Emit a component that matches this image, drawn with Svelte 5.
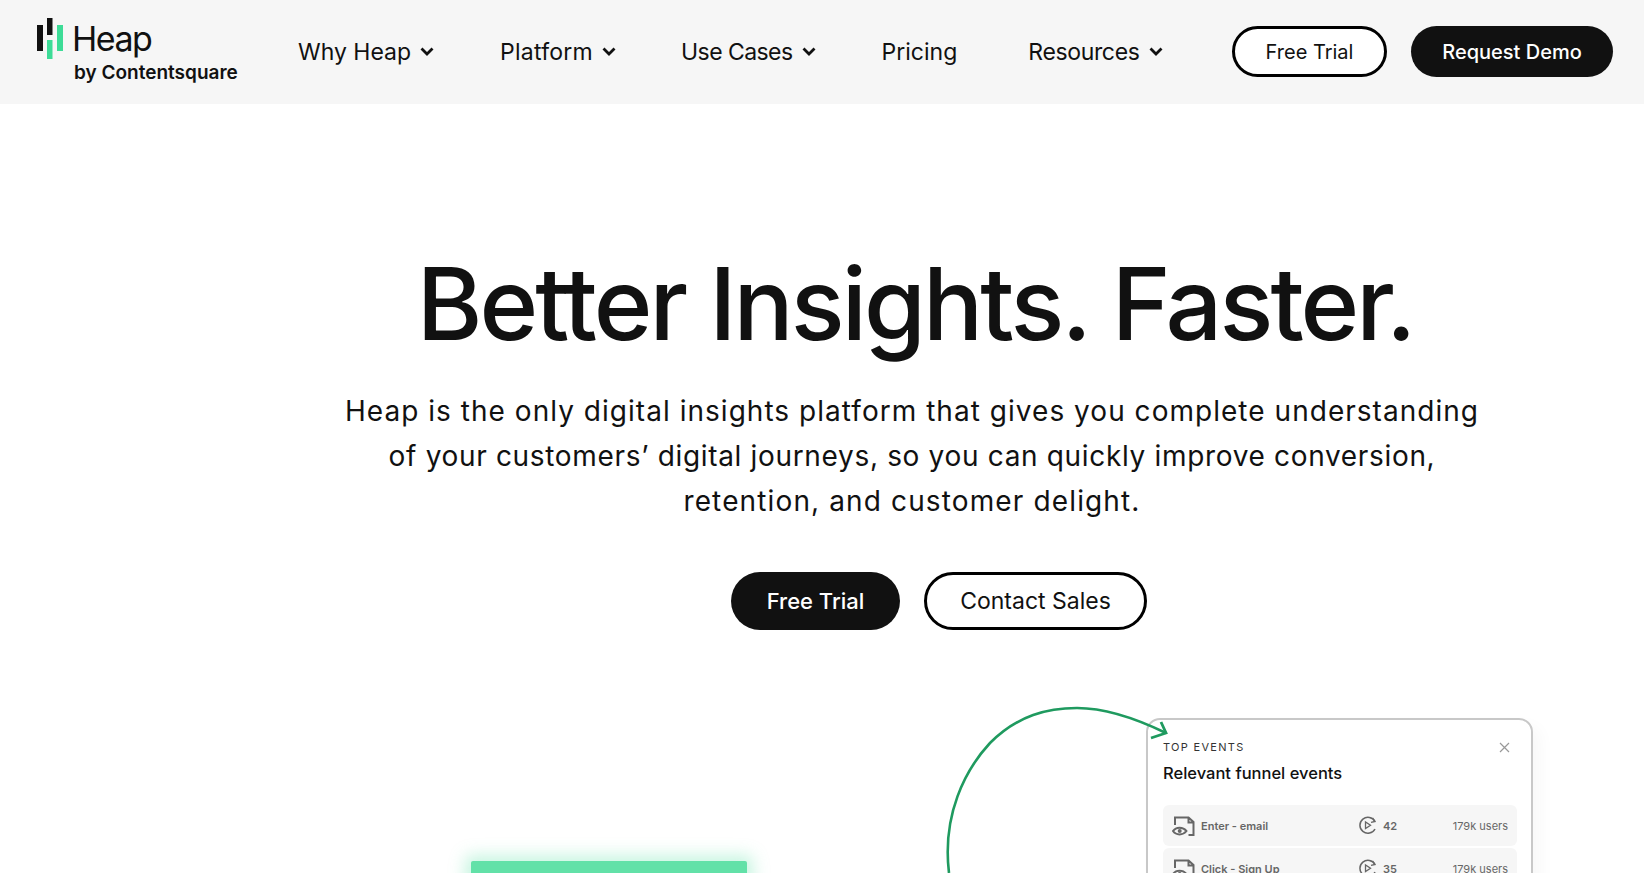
<script>
  const navItems = [
    { label: 'Why Heap', caret: true, gap: 66, spacing: 0 },
    { label: 'Platform', caret: true, gap: 65, spacing: 0.25 },
    { label: 'Use Cases', caret: true, gap: 66, spacing: -0.55 },
    { label: 'Pricing', caret: false, gap: 71, spacing: 0 },
    { label: 'Resources', caret: true, gap: 0, spacing: -0.35 }
  ];

  const events = [
    { name: 'Enter - email', count: 42, users: '179k users' },
    { name: 'Click - Sign Up', count: 35, users: '179k users' }
  ];
</script>

<div class="page">
  <header class="nav">
    <a class="logo" href="#top">
      <div class="logo-top">
        <svg width="28" height="42" viewBox="0 0 28 42">
          <rect x="0" y="7" width="6" height="26" fill="#111" />
          <rect x="10" y="0" width="5.500" height="17" fill="#111" />
          <rect x="10" y="22" width="5.500" height="19" fill="#3ddc97" />
          <rect x="20" y="7" width="6" height="26" fill="#3ddc97" />
        </svg>
        <span class="logo-name">Heap</span>
      </div>
      <span class="logo-sub">by Contentsquare</span>
    </a>

    <nav class="menu">
      {#each navItems as item}
        <span class="menu-item" style="margin-right: {item.gap}px; letter-spacing: {item.spacing}px">
          {item.label}
          {#if item.caret}
            <svg width="14" height="10" viewBox="0 0 14 10">
              <path d="M1.500 1.500 7 7l5.500-5.500" fill="none" stroke="#111" stroke-width="2.800" />
            </svg>
          {/if}
        </span>
      {/each}
    </nav>

    <div class="nav-actions">
      <button class="btn btn-outline nav-trial">Free Trial</button>
      <button class="btn btn-dark nav-demo">Request Demo</button>
    </div>
  </header>

  <main class="hero">
    <h1>Better Insights. Faster.</h1>
    <p>
      <span class="line-1">Heap is the only digital insights platform that gives you complete understanding</span>
      <span class="line-2">of your customers’ digital journeys, so you can quickly improve conversion,</span>
      <span class="line-3">retention, and customer delight.</span>
    </p>
    <div class="hero-actions">
      <button class="btn btn-dark big trial">Free Trial</button>
      <button class="btn btn-outline big sales">Contact Sales</button>
    </div>
  </main>

  <section class="visual">
    <div class="green-bar"></div>

    <svg class="arrow" width="240" height="175" viewBox="0 0 240 175">
      <path
        d="M9 173C2 115 25 70 50 43 78 15 108 8 137 8 165 8 195 18 226 33"
        fill="none"
        stroke="#1f9a5f"
        stroke-width="2.600"
      />
      <path d="M221 22 226 33 211 38" fill="none" stroke="#1f9a5f" stroke-width="2.800" />
    </svg>

    <div class="card">
      <div class="card-head">
        <span class="eyebrow">TOP EVENTS</span>
        <svg width="11" height="11" viewBox="0 0 11 11">
          <path d="M1 1l9 9M10 1l-9 9" stroke="#999" stroke-width="1.200" />
        </svg>
      </div>
      <div class="card-title">Relevant funnel events</div>
      <div class="rows">
        {#each events as ev}
          <div class="row">
            <svg width="23" height="20" viewBox="0 0 23 20">
              <path
                d="M3 9V1.500h13.500l5 4.500v13h-5M16.500 1.500v5h5"
                fill="none"
                stroke="#666"
                stroke-width="2"
              />
              <path d="M1 15c3-4.500 10-4.500 13.500 0-3.500 4.500-10.500 4.500-13.500 0z" fill="#f6f6f6" stroke="#666" stroke-width="2" />
              <circle cx="7.700" cy="15" r="2" fill="#666" />
            </svg>
            <span class="ev-name">{ev.name}</span>
            <svg class="replay" width="18" height="19" viewBox="0 0 18 19">
              <path d="M16 5.500A8 8 0 1 0 16 13" fill="none" stroke="#666" stroke-width="1.500" />
              <path d="M13.500 1.800 16 5.500l-4 .8" fill="none" stroke="#666" stroke-width="1.300" />
              <path d="M6.500 6v6.500l5-3.250z" fill="none" stroke="#666" stroke-width="1.300" />
            </svg>
            <span class="ev-count">{ev.count}</span>
            <span class="ev-users">{ev.users}</span>
          </div>
        {/each}
      </div>
    </div>
  </section>
</div>

<style>
  :global(body) {
    margin: 0;
    background: #fff;
    overflow: hidden;
  }

  .page {
    height: 873px;
    overflow: hidden;
    font-family: Inter, "Liberation Sans", sans-serif;
    color: #111;
  }

  .nav {
    height: 104px;
    background: #f6f6f6;
    display: flex;
    align-items: flex-start;
    padding-left: 37px;
    padding-right: 31px;
    box-sizing: border-box;
  }

  .logo {
    width: 261px;
    padding-top: 18px;
    color: #111;
    text-decoration: none;
    display: block;
  }

  .logo-top {
    display: flex;
    align-items: flex-start;
    gap: 7px;
    height: 42px;
  }

  .logo-name {
    font-size: 34px;
    letter-spacing: -1.500px;
    line-height: 42px;
  }

  .logo-sub {
    display: block;
    margin-left: 37px;
    margin-top: 2px;
    font-size: 19px;
    font-weight: 600;
    line-height: 22px;
  }

  .menu {
    display: flex;
    flex: 1;
    padding-top: 36px;
  }

  .menu-item {
    display: flex;
    align-items: center;
    gap: 9px;
    font-size: 23px;
    line-height: 32px;
    white-space: nowrap;
  }

  .nav-actions {
    display: flex;
    gap: 24px;
    padding-top: 26px;
  }

  .btn {
    font-family: inherit;
    border-radius: 30px;
    box-sizing: border-box;
    font-size: 20px;
    height: 51px;
    padding: 0;
    color: #111;
  }

  .btn-outline {
    background: #fff;
    border: 3px solid #000;
  }

  .btn-dark {
    background: #111;
    border: none;
    color: #fff;
    font-weight: 500;
  }

  .nav-trial { width: 155px; }
  .nav-demo { width: 202px; }

  .big {
    height: 58px;
    font-size: 23px;
  }

  .trial {
    width: 169px;
    font-size: 22px;
  }

  .sales { width: 223px; }

  .hero {
    text-align: center;
  }

  h1 {
    margin: 138px 0 0;
    padding-left: 186px;
    font-size: 100px;
    line-height: 124px;
    font-weight: 450;
    letter-spacing: -2.900px;
  }

  p {
    margin: 23px 0 0;
    padding-left: 180px;
    font-size: 28px;
    line-height: 45px;
  }

  p span {
    display: block;
  }

  .line-1 { letter-spacing: 1.030px; }
  .line-2 { letter-spacing: 0.670px; }
  .line-3 { letter-spacing: 1.130px; }

  .hero-actions {
    display: flex;
    justify-content: center;
    gap: 24px;
    margin-top: 48px;
    padding-left: 234px;
  }

  .visual {
    position: relative;
    display: flex;
    justify-content: space-between;
    align-items: flex-start;
    padding: 88px 111px 0 471px;
  }

  .green-bar {
    width: 276px;
    height: 100px;
    margin-top: 143px;
    background: #62e1a8;
    box-shadow: 0 0 16px 6px rgba(98, 225, 168, 0.35);
    border-radius: 2px;
  }

  .arrow {
    position: absolute;
    left: 940px;
    top: 70px;
    z-index: 2;
  }

  .card {
    width: 387px;
    height: 300px;
    box-sizing: border-box;
    border: 2px solid #c8c8c8;
    border-radius: 14px;
    padding: 20px 14px 0 15px;
    box-shadow: 8px 8px 16px rgba(0, 0, 0, 0.03);
  }

  .card-head {
    display: flex;
    justify-content: space-between;
    align-items: center;
    padding-right: 7px;
  }

  .eyebrow {
    font-size: 11px;
    letter-spacing: 1.300px;
    color: #333;
  }

  .card-title {
    font-size: 16.500px;
    font-weight: 500;
    margin-top: 9px;
  }

  .rows {
    margin-top: 22px;
    display: flex;
    flex-direction: column;
    gap: 2px;
  }

  .row {
    height: 41px;
    background: #f6f6f6;
    border-radius: 6px;
    display: flex;
    align-items: center;
    padding: 0 9px;
    font-size: 11px;
    color: #666;
  }

  .ev-name {
    width: 158px;
    margin-left: 6px;
    font-weight: 600;
  }

  .ev-count {
    margin-left: 6px;
    width: 48px;
    font-weight: 600;
  }

  .ev-users {
    margin-left: auto;
  }
</style>
